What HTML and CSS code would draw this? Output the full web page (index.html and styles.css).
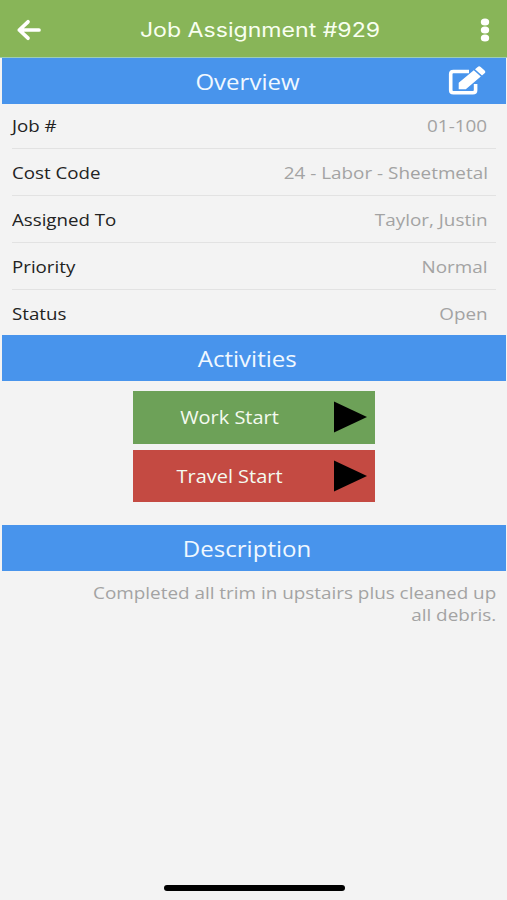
FILE: index.html
```html
<!DOCTYPE html>
<html lang="en">
<head>
<meta charset="utf-8">
<title>Job Assignment #929</title>
<link rel="stylesheet" href="styles.css">
</head>
<body>
<div class="screen">
  <header class="topbar">
    <svg class="back" width="25" height="22" viewBox="0 0 25 22"><path d="M12 2.800 3.300 11l8.700 8.200M3.300 11H23" fill="none" stroke="#fff" stroke-width="3.700" stroke-linecap="round" stroke-linejoin="round"/></svg>
    <h1><span class="wide title">Job Assignment #929</span></h1>
    <svg class="more" width="10" height="26" viewBox="0 0 10 26" fill="#fff"><ellipse cx="5" cy="5" rx="4.200" ry="3.600"/><ellipse cx="5" cy="13" rx="4.200" ry="3.600"/><ellipse cx="5" cy="21" rx="4.200" ry="3.600"/></svg>
  </header>
  <section class="overview">
    <h2 class="band"><span class="wide">Overview</span>
      <svg class="edit" width="39" height="30" viewBox="0 0 39 30"><path d="M22 5.500H6.400Q3.700 5.500 3.700 8v16.300q0 2.500 2.700 2.500h19.500q2.700 0 2.700-2.500V18" fill="none" stroke="#fff" stroke-width="3.600"/><path d="M11.700 23.300v-6.500L26.800 4.200l7 6.300L18.800 23.300zM28 3.200l2.700-2.300q1.500-1.200 3 .1l3.900 3.500q1.400 1.400 0 2.800L35 9.500z" fill="#fff"/></svg>
    </h2>
    <dl class="rows">
      <div class="row"><dt><span class="wide left">Job #</span></dt><dd><span class="wide right">01-100</span></dd></div>
      <div class="row"><dt><span class="wide left">Cost Code</span></dt><dd><span class="wide right">24 - Labor - Sheetmetal</span></dd></div>
      <div class="row"><dt><span class="wide left">Assigned To</span></dt><dd><span class="wide right">Taylor, Justin</span></dd></div>
      <div class="row"><dt><span class="wide left">Priority</span></dt><dd><span class="wide right">Normal</span></dd></div>
      <div class="row"><dt><span class="wide left">Status</span></dt><dd><span class="wide right">Open</span></dd></div>
    </dl>
  </section>
  <section class="activities">
    <h2 class="band"><span class="wide">Activities</span></h2>
    <div class="buttons">
      <button class="action work"><span class="wide">Work Start</span><svg width="33" height="32" viewBox="0 0 33 32"><path d="M0 .5 33 16 0 31.500z"/></svg></button>
      <button class="action travel"><span class="wide">Travel Start</span><svg width="33" height="32" viewBox="0 0 33 32"><path d="M0 .5 33 16 0 31.500z"/></svg></button>
    </div>
  </section>
  <section class="description">
    <h2 class="band"><span class="wide">Description</span></h2>
    <p><span class="wide right">Completed all trim in upstairs plus cleaned up<br>all debris.</span></p>
  </section>
  <div class="home"></div>
</div>
</body>
</html>
```
FILE: styles.css
```css
* { box-sizing: border-box; }
body { margin: 0; font-family: "Open Sans", "Noto Sans", sans-serif; background: #f3f3f3; }
h1, h2, dl, dd, p { margin: 0; font-weight: 400; }
.screen { height: 900px; display: flex; flex-direction: column; overflow: hidden; }
.wide { display: inline-block; white-space: nowrap; transform: scaleX(1.11); }
.wide.left { transform: scaleX(1.1); transform-origin: left; }
.wide.right { transform-origin: right; }
.topbar { height: 58px; flex: none; display: flex; align-items: center; justify-content: space-between; padding: 2px 16.500px 0 16px; background: #88b558; border-bottom: 1px solid #9ccdb8; color: #f8fff0; }
.topbar h1 { font: 400 20px/30px Inter, sans-serif; margin-left: -1px; }
.topbar .title { transform: scaleX(1.155); }
.back, .more { flex: none; }
.band { height: 46px; margin: 0 1px 0 2px; padding: 1px 13px 0 0; display: flex; align-items: center; justify-content: center; position: relative; background: #4894ec; color: #f0f8ff; font-size: 21px; line-height: 30px; }
.band .wide { transform: scaleX(1.145); }
.edit { position: absolute; right: 20px; top: 8px; }
.rows { padding: 0 11px 0 12px; height: 231px; }
.row { height: 47px; display: flex; justify-content: space-between; align-items: center; padding: 0 8.500px 0 0; border-bottom: 1px solid #e2e2e2; font-size: 17px; line-height: 24px; }
.row:not(:first-child) { padding-top: 1px; }
.row:first-child { height: 45px; }
.row:last-child { height: 46px; border: 0; }
dt { color: #222; }
dt .wide { margin-left: -.5px; }
dd { color: #a3a3a3; }
.activities { height: 190px; }
.buttons { display: flex; flex-direction: column; align-items: center; gap: 6px; padding: 10px 0 0 1px; }
.action { width: 242px; height: 52.500px; display: grid; grid-template-columns: 193px 33px; gap: 8px; align-items: center; border: 0; padding: 0; color: #f4faf0; font: 17.500px/24px "Open Sans", sans-serif; text-align: center; }
.action .wide { transform: scaleX(1.14); }
.work { background: #6da158; }
.travel { background: #c44a42; }
.description p { padding: 11px 11px 0 0; text-align: right; color: #a3a3a3; font-size: 17px; line-height: 22px; }
.home { width: 181px; height: 6px; margin: auto auto 9px 163.500px; border-radius: 3px; background: #000; }
```
